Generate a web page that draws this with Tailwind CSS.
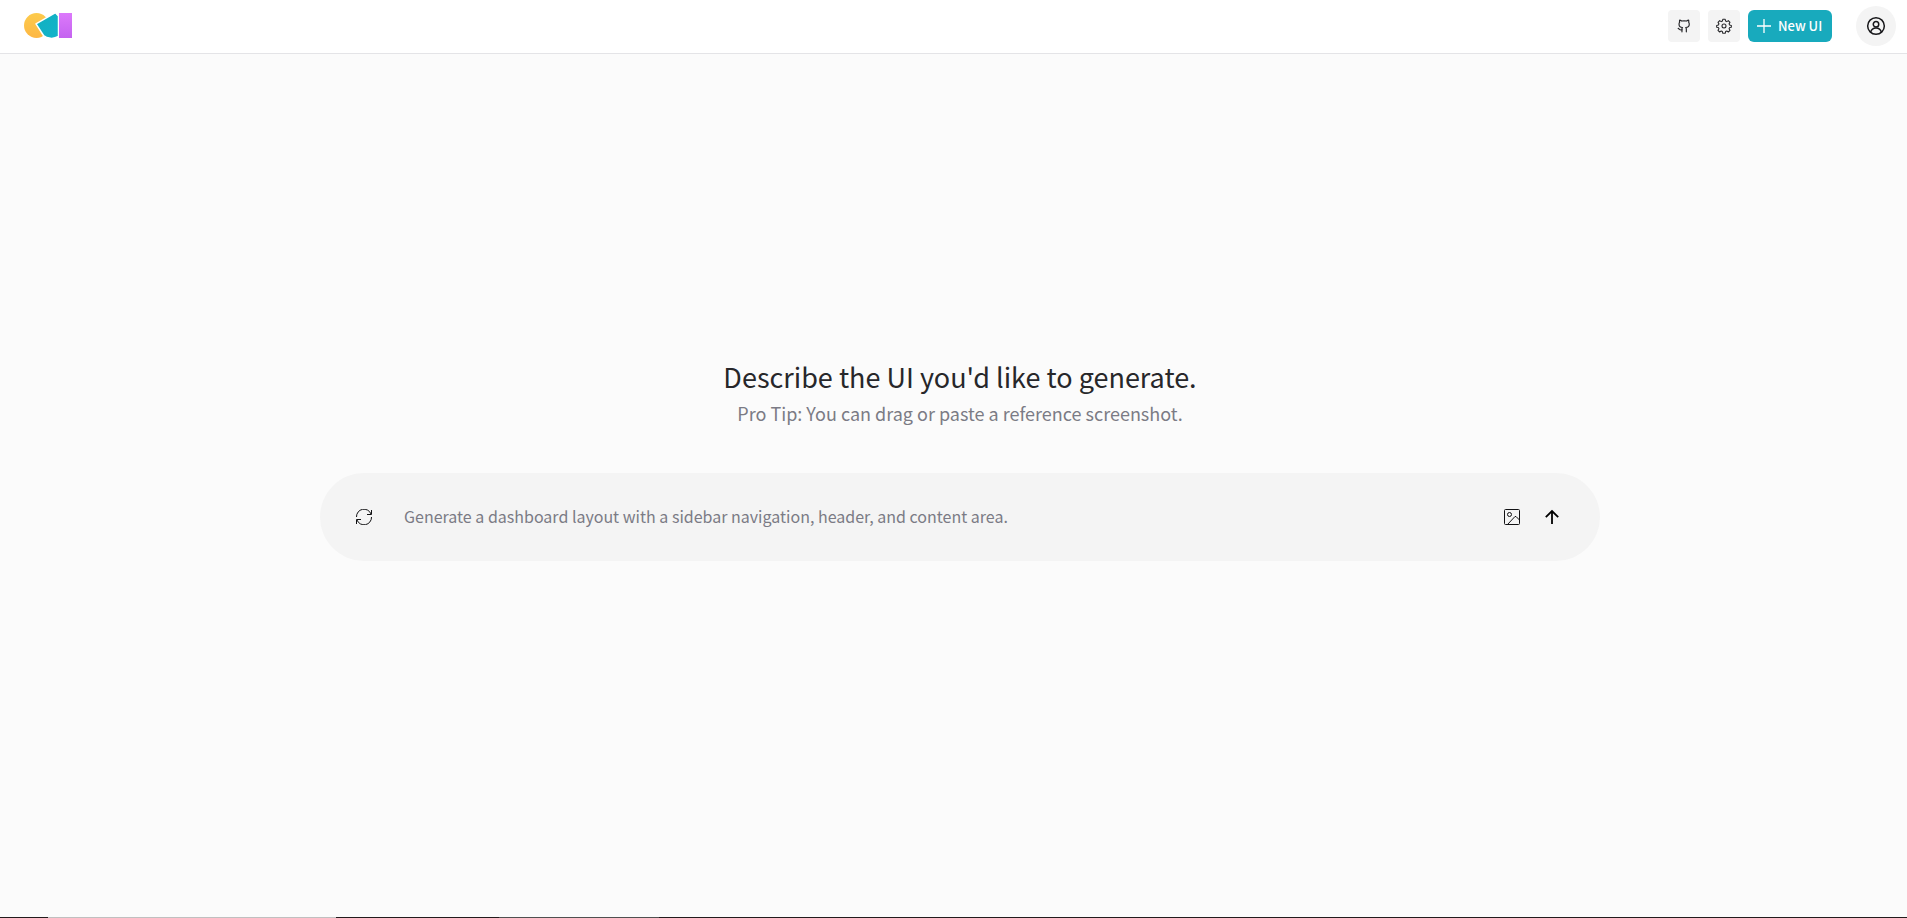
<!DOCTYPE html>
<html lang="en">
<head>
<meta charset="utf-8">
<title>New UI</title>
<script src="https://cdn.jsdelivr.net/npm/@tailwindcss/browser@4"></script>
</head>
<body class="flex min-h-screen flex-col bg-[#fbfbfb] font-['Source_Sans_Pro','Noto_Sans_CJK_SC',sans-serif] text-[#27272a]">
<header class="flex h-[54px] items-center justify-between border-b border-[#e4e4e7] bg-white pr-[11px] pb-px pl-6">
  <a href="#" aria-label="Home">
    <svg class="h-[26px] w-12" viewBox="0 0 48 26" fill="none">
      <defs>
        <linearGradient id="sun" x1="0" y1="0" x2="0" y2="1"><stop stop-color="#fdcb4c"/><stop offset="1" stop-color="#fdb744"/></linearGradient>
        <linearGradient id="sea" x1="0" y1="0" x2="1" y2="1"><stop stop-color="#10b0bf"/><stop offset="1" stop-color="#14b3cb"/></linearGradient>
        <linearGradient id="plum" x1="0" y1="0" x2="0" y2="1"><stop stop-color="#dc79fb"/><stop offset="1" stop-color="#c463f0"/></linearGradient>
      </defs>
      <circle cx="12.500" cy="12.500" r="12.500" fill="url(#sun)"/>
      <path d="M12 10.800 31.500 -.3 34.500 3V23.500C29.500 26.500 23 25.800 19.500 22.500Z" fill="url(#sea)" stroke="#fff" stroke-width="1.500" stroke-linejoin="round"/>
      <path d="M34 0H48V26H34Z" fill="#fff"/>
      <path d="M35 0H48V25H35Z" fill="url(#plum)"/>
    </svg>
  </a>
  <nav class="flex items-center gap-2">
    <a href="#" aria-label="GitHub" class="flex size-8 items-center justify-center rounded bg-[#f4f4f4]">
      <svg class="size-3.5" viewBox="0 0 24 24" fill="none" stroke="currentColor" stroke-width="2" stroke-linecap="round" stroke-linejoin="round"><path d="M16 22v-4.500a4.800 4.800 0 0 0-1-3c3.500 0 6-2 6-5.500.08-1.250-.27-2.480-1-3.500.28-1.150.28-2.350 0-3.500 0 0-1.500 0-3.500 1.500-2.640-.5-5.860-.5-8.500 0C6 2 4.500 2 4.500 2c-.3 1.150-.3 2.350 0 3.500A5.403 5.403 0 0 0 3.500 9c0 3.500 3 5.500 6 5.500-.39.490-.68 1.050-.85 1.650-.17.600-.22 1.230-.15 1.850v4"/><path d="M8.500 18.500c-4 1.500-4.500-2-6.500-2.500"/></svg>
    </a>
    <button type="button" aria-label="Settings" class="flex size-8 items-center justify-center rounded bg-[#f4f4f4]">
      <svg class="size-4" viewBox="0 0 24 24" fill="none" stroke="currentColor" stroke-width="1.600" stroke-linejoin="round"><circle cx="12" cy="12" r="3"/><path d="M10.200 2h3.600l.6 2.600 1.800.8L18.500 4 21 6.500 19.600 8.800l.8 1.800 2.600.6v2.600l-2.600.6-.8 1.800 1.400 2.300-2.500 2.500-2.300-1.400-1.800.8-.6 2.600h-3.600l-.6-2.600-1.800-.8L5.500 21 3 18.500l1.400-2.300-.8-1.800-2.600-.6v-2.600l2.600-.6.800-1.800L3 6.500 5.500 4l2.300 1.400 1.800-.8Z"/></svg>
    </button>
    <button type="button" class="flex h-8 w-21 items-center gap-1.5 rounded-md bg-[#18aabd] pl-2 text-[13px] font-medium text-white">
      <svg class="size-4" viewBox="0 0 16 16" stroke="currentColor" stroke-width="1.300"><path d="M8 1V15M1 8H15"/></svg>
      New UI
    </button>
    <button type="button" aria-label="Account" class="ml-4 flex size-10 items-center justify-center rounded-full bg-[#f4f4f4]">
      <svg class="size-5" viewBox="0 0 24 24" fill="none" stroke="#18181b" stroke-width="1.800"><circle cx="12" cy="12" r="10"/><circle cx="12" cy="10" r="3.300"/><path d="M5.500 19.500C6.500 16 9 14.500 12 14.500s5.500 1.500 6.500 5"/></svg>
    </button>
  </nav>
</header>
<main class="flex flex-1 flex-col items-center justify-center pb-[52px] pl-[13px]">
  <h1 class="text-[27px] leading-9 font-normal">Describe the UI you'd like to generate.</h1>
  <p class="text-[18px] leading-9 text-[#7b7b85]">Pro Tip: You can drag or paste a reference screenshot.</p>
  <form class="mt-[42px] flex h-[88px] w-full max-w-7xl items-center rounded-full bg-[#f4f4f4] pr-7 pl-6 text-[#111113]">
    <button type="button" aria-label="Shuffle prompt" class="flex size-10 items-center justify-center">
      <svg class="size-4" viewBox="0 0 16 16" fill="none" stroke="currentColor" stroke-width="1"><path d="M.5 8A7.500 7.500 0 0 1 15 5M15.500 1v4.500H11M15.500 8A7.500 7.500 0 0 1 1 11M.5 15v-4.500H5"/></svg>
    </button>
    <input type="text" aria-label="Prompt" placeholder="Generate a dashboard layout with a sidebar navigation, header, and content area." class="ml-5 min-w-0 flex-1 bg-transparent pb-0.5 text-[16px] placeholder:text-[#7b7b85] outline-none">
    <button type="button" aria-label="Attach image" class="flex size-10 items-center justify-center">
      <svg class="size-4" viewBox="0 0 16 16" fill="none" stroke="currentColor" stroke-width="1"><rect x=".5" y=".5" width="15" height="15" rx="1"/><circle cx="5.500" cy="5.500" r="2"/><path d="M3.500 15.500 11 7.500h1L15.500 11"/></svg>
    </button>
    <button type="submit" aria-label="Send" class="flex size-10 items-center justify-center text-black">
      <svg class="size-4" viewBox="0 0 16 16" fill="none" stroke="currentColor" stroke-width="1.800"><path d="M8 15V2M1.800 8.200 8 2l6.200 6.200"/></svg>
    </button>
  </form>
</main>
<footer class="flex h-px bg-[#231b1c]">
  <div class="ml-12 h-px w-72 bg-[#c0c0c0]"></div>
  <div class="ml-[163px] h-px w-40 bg-[#505050]"></div>
</footer>
</body>
</html>
